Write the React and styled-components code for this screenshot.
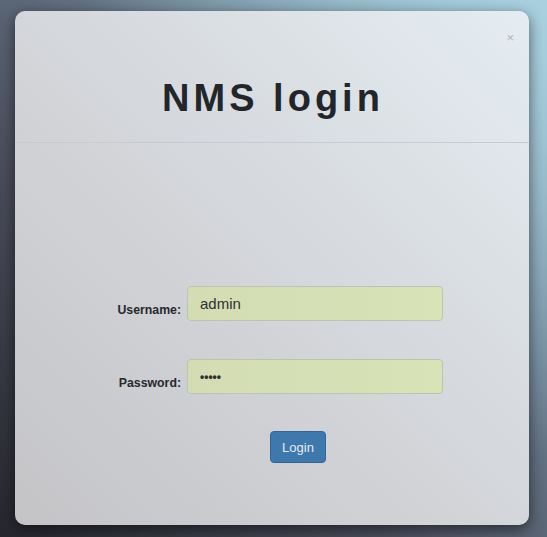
import React from 'react';
import styled, { createGlobalStyle } from 'styled-components';

const GlobalStyle = createGlobalStyle`
  html, body {
    margin: 0;
    padding: 0;
  }
  body {
    font-family: "Liberation Sans", Arial, sans-serif;
  }
`;

// page backdrop with the blurred gradient
const Page = styled.div`
  width: 547px;
  height: 537px;
  box-sizing: border-box;
  padding: 11px 18px 12px 15px;
  background:
    radial-gradient(ellipse at 100% 0%, rgba(170, 210, 224, 0.9) 0%, rgba(170, 210, 224, 0) 60%),
    linear-gradient(to top right, #26272d 0%, #4a4d5c 35%, #6a7d8e 65%, #9cc3d2 100%);
  overflow: hidden;
`;

const Card = styled.div`
  position: relative;
  height: 514px;
  border-radius: 10px;
  background: linear-gradient(to top right, #c4c4c7 0%, #d2d4d8 45%, #e5edf2 100%);
  box-shadow: 0 4px 14px rgba(0, 0, 0, 0.55);
  display: flex;
  flex-direction: column;
`;

const Header = styled.div`
  height: 132px;
  border-bottom: 1px solid #c6cbd1;
  display: flex;
  align-items: center;
  justify-content: center;
  padding-top: 44px;
  box-sizing: border-box;
`;

const Title = styled.h1`
  margin: 0;
  font-size: 38px;
  font-weight: bold;
  letter-spacing: 4px;
  color: #22262b;
  padding-left: 2px;
`;

const Close = styled.span`
  position: absolute;
  top: 20px;
  right: 15px;
  font-size: 13px;
  color: #b0b6bc;
  line-height: 1;
`;

const Form = styled.div`
  display: grid;
  grid-template-columns: 166px 256px 1fr;
  column-gap: 6px;
  padding-top: 143px;
`;

const Label = styled.label`
  grid-column: 1;
  justify-self: end;
  align-self: end;
  font-size: 12.3px;
  font-weight: bold;
  color: #26292d;
  padding-bottom: 4px;
`;

const Input = styled.div`
  grid-column: 2;
  height: 35px;
  box-sizing: border-box;
  border: 1px solid #bcc4b0;
  border-radius: 4px;
  background: linear-gradient(to right, #d3dcb2, #d8e3b8);
  display: flex;
  align-items: center;
  padding-left: 12px;
  font-size: 15px;
  color: #2e3030;
  margin-top: ${({ $gap }) => $gap || 0}px;
`;

const Dots = styled.span`
  font-size: 12px;
  font-weight: bold;
  padding-top: 1px;
`;

const Button = styled.button`
  grid-column: 2;
  justify-self: start;
  margin-left: 83px;
  margin-top: 37px;
  width: 56px;
  height: 32px;
  border: 1px solid #31669a;
  border-radius: 4px;
  background: #3e78ad;
  color: #e4ecf4;
  font-family: "Liberation Sans", Arial, sans-serif;
  font-size: 13px;
  padding: 0;
`;

const App = () => (
  <>
    <GlobalStyle />
    <Page>
      <Card>
        <Close>×</Close>
        <Header>
          <Title>NMS login</Title>
        </Header>
        <Form>
          <Label>Username:</Label>
          <Input>admin</Input>
          <Label>Password:</Label>
          <Input $gap={38}>
            <Dots>•••••</Dots>
          </Input>
          <Button>Login</Button>
        </Form>
      </Card>
    </Page>
  </>
);

export default App;
